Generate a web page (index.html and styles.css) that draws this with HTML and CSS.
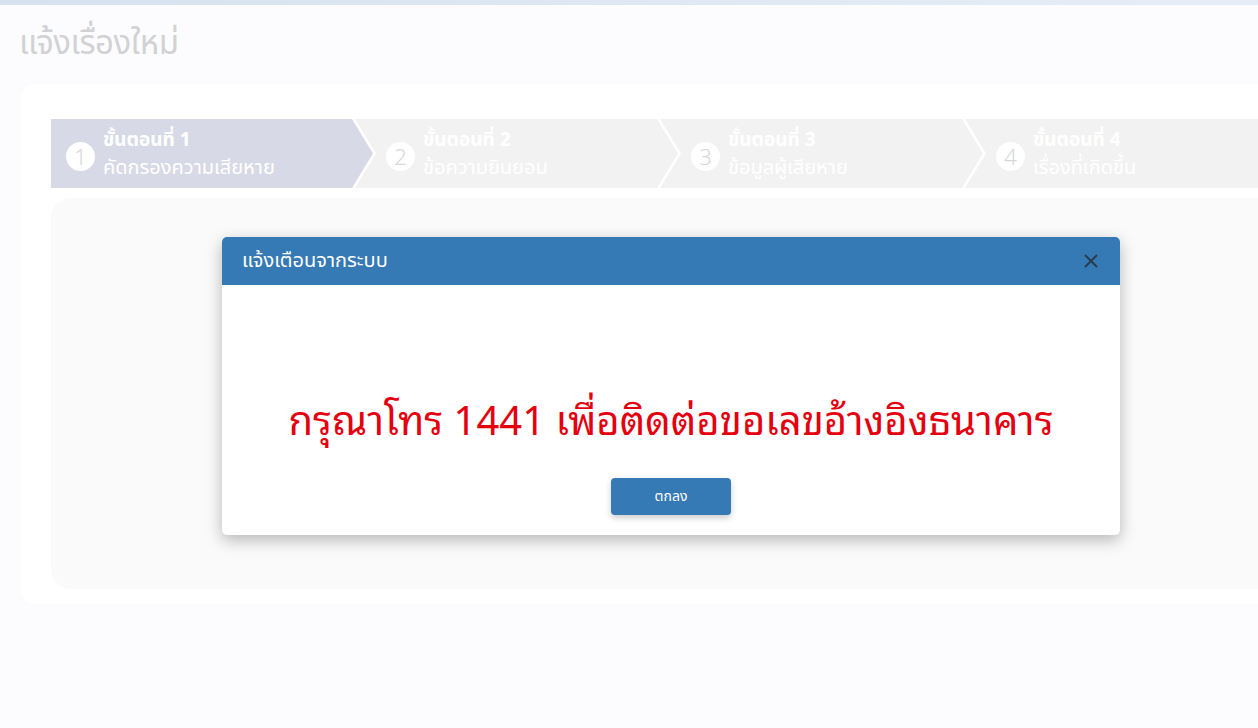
FILE: index.html
```html
<!DOCTYPE html>
<html lang="th">
<head>
<meta charset="utf-8">
<title>แจ้งเรื่องใหม่</title>
<link rel="stylesheet" href="styles.css">
</head>
<body>
<div class="topbar"></div>
<main class="page">
  <h1 class="page-title">แจ้งเรื่องใหม่</h1>
  <section class="card">
    <ol class="steps">
      <li class="step step-active">
        <span class="step-num">1</span>
        <span class="step-text"><b>ขั้นตอนที่ 1</b><span>คัดกรองความเสียหาย</span></span>
      </li>
      <li class="step">
        <span class="step-num">2</span>
        <span class="step-text"><b>ขั้นตอนที่ 2</b><span>ข้อความยินยอม</span></span>
      </li>
      <li class="step">
        <span class="step-num">3</span>
        <span class="step-text"><b>ขั้นตอนที่ 3</b><span>ข้อมูลผู้เสียหาย</span></span>
      </li>
      <li class="step">
        <span class="step-num">4</span>
        <span class="step-text"><b>ขั้นตอนที่ 4</b><span>เรื่องที่เกิดขึ้น</span></span>
      </li>
    </ol>
    <div class="panel"></div>
  </section>
</main>

<div class="modal" role="dialog">
  <div class="modal-header">
    <h2 class="modal-title">แจ้งเตือนจากระบบ</h2>
    <button class="modal-close" aria-label="close">
      <svg width="14" height="14" viewBox="0 0 14 14"><path d="M1 1 L13 13 M13 1 L1 13" stroke="#2b3a4a" stroke-width="1.8" fill="none"/></svg>
    </button>
  </div>
  <div class="modal-body">
    <p class="modal-message">กรุณาโทร 1441 เพื่อติดต่อขอเลขอ้างอิงธนาคาร</p>
    <button class="btn-ok">ตกลง</button>
  </div>
</div>
</body>
</html>
```
FILE: styles.css
```css
html, body {
  margin: 0;
  padding: 0;
  overflow: hidden;
}
body {
  width: 1258px;
  height: 728px;
  background: #fcfcfe;
  font-family: "Noto Sans", "Noto Sans Thai", sans-serif;
  position: relative;
}
.topbar {
  height: 5px;
  background: linear-gradient(90deg, #d6e2f0, #e6edf6);
}
.page {
  padding: 15px 0 0 21px;
}
.page-title {
  margin: 0 0 0 -2px;
  font-size: 33px;
  line-height: 44px;
  font-weight: 400;
  color: #d2d2d4;
  letter-spacing: -0.5px;
}
.card {
  margin-top: 20px;
  background: #ffffff;
  border-radius: 14px 0 0 14px;
  width: 1300px;
  padding: 35px 0 15px 30px;
  box-sizing: border-box;
}
.steps {
  list-style: none;
  margin: 0;
  padding: 0;
  display: flex;
  height: 69px;
}
.step {
  flex: 0 0 323px;
  margin-left: -18px;
  background: #f2f2f2;
  display: flex;
  align-items: center;
  gap: 8px;
  padding-left: 31px;
  box-sizing: border-box;
  clip-path: polygon(0 0, calc(100% - 21px) 0, 100% 50%, calc(100% - 21px) 100%, 0 100%, 21px 50%);
  color: #ffffff;
}
.step-active {
  margin-left: 0;
  flex-basis: 322px;
  padding-left: 15px;
  background: #d8d9e6;
  clip-path: polygon(0 0, calc(100% - 21px) 0, 100% 50%, calc(100% - 21px) 100%, 0 100%);
}
.step-num {
  width: 29px;
  height: 29px;
  border-radius: 50%;
  background: #ffffff;
  color: #d6d6da;
  font-size: 22px;
  font-weight: 300;
  line-height: 29px;
  text-align: center;
  margin-top: 6px;
  flex: none;
}
.step-text {
  display: flex;
  flex-direction: column;
  line-height: 27px;
  margin-top: -2px;
}
.step-text b {
  font-size: 19px;
  font-weight: 700;
}
.step-text span {
  font-size: 20px;
  font-weight: 400;
}
.panel {
  margin-top: 10px;
  height: 391px;
  background: #fafafa;
  border-radius: 20px 0 0 20px;
}
.modal {
  position: absolute;
  left: 222px;
  top: 237px;
  width: 898px;
  background: #ffffff;
  border-radius: 5px;
  box-shadow: 0 5px 16px rgba(0, 0, 0, 0.28);
  overflow: hidden;
}
.modal-header {
  height: 48px;
  background: #3579b5;
  display: flex;
  align-items: center;
  justify-content: space-between;
  padding: 0 20px;
}
.modal-title {
  margin: 0;
  font-size: 20px;
  font-weight: 400;
  color: #ffffff;
}
.modal-close {
  border: 0;
  background: none;
  padding: 0;
  width: 14px;
  height: 14px;
  display: flex;
  margin-right: 2px;
}
.modal-body {
  display: flex;
  flex-direction: column;
  align-items: center;
  padding: 106px 0 20px;
}
.modal-message {
  margin: 0;
  font-family: "Noto Sans Thai Looped", "Noto Sans", "Noto Sans Thai", sans-serif;
  font-size: 40px;
  line-height: 52px;
  color: #e5000f;
}
.btn-ok {
  margin-top: 35px;
  width: 120px;
  height: 37px;
  border: 0;
  border-radius: 4px;
  background: #3579b5;
  color: #ffffff;
  font-family: inherit;
  font-size: 14px;
  box-shadow: 0 3px 6px rgba(0, 0, 0, 0.2);
}
```
